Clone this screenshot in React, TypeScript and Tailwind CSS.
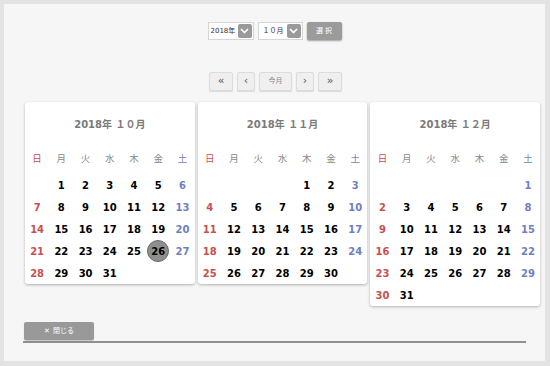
const WEEK = ["日", "月", "火", "水", "木", "金", "土"];

const MONTHS = [
  { title: "2018年 １０月", start: 1, days: 31 },
  { title: "2018年 １１月", start: 4, days: 30 },
  { title: "2018年 １２月", start: 6, days: 31 },
];

function dayColor(col: number) {
  if (col === 0) return "text-[#c8504e]";
  if (col === 6) return "text-[#6f7fc0]";
  return "text-black";
}

function Chevron() {
  return (
    <span className="flex h-[14px] w-[14px] shrink-0 items-center justify-center rounded-[2px] bg-[#9a9a9a]">
      <svg width="9" height="6" viewBox="0 0 9 6" fill="none">
        <path d="M1 1l3.5 3.5L8 1" stroke="#fff" strokeWidth="1.6" />
      </svg>
    </span>
  );
}

function Month({ title, start, days, selected }: { title: string; start: number; days: number; selected?: number }) {
  const cells: (number | null)[] = [];
  for (let i = 0; i < start; i++) cells.push(null);
  for (let d = 1; d <= days; d++) cells.push(d);
  while (cells.length % 7) cells.push(null);

  return (
    <div className="flex-1 rounded-[3px] bg-white shadow-[0_1px_3px_rgba(0,0,0,0.28)]">
      <div className="flex h-[44px] items-center justify-center text-[10px] font-bold text-[#7a7a7a]">{title}</div>
      <div className="grid h-[26px] grid-cols-7 items-center text-center text-[9.5px]">
        {WEEK.map((w, i) => (
          <span key={w} className={i === 0 ? "text-[#c8504e]" : i === 6 ? "text-[#6f7fc0]" : "text-[#888]"}>
            {w}
          </span>
        ))}
      </div>
      <div className="grid grid-cols-7 pt-[2px] text-center text-[10px] font-bold">
        {cells.map((d, i) => (
          <div key={i} className="flex h-[22px] items-center justify-center">
            {d === selected ? (
              <span className="flex h-[22px] w-[22px] items-center justify-center rounded-full border border-[#6a6a6a] bg-[#8e8e8e] text-black">
                {d}
              </span>
            ) : (
              <span className={dayColor(i % 7)}>{d ?? ""}</span>
            )}
          </div>
        ))}
      </div>
    </div>
  );
}

const navBtn =
  "flex h-[19px] items-center justify-center rounded-[2px] border border-[#dcdcdc] bg-[#efefef] text-[#555] shadow-[0_1px_1px_rgba(0,0,0,0.12)]";

export default function App() {
  return (
    <div
      className="h-[366px] w-[550px] bg-[#e3e3e3] pl-[4px] pt-[4px]"
      style={{ fontFamily: '"DejaVu Sans", "Noto Sans CJK JP", sans-serif' }}
    >
      <div className="h-[357px] w-[541px] bg-[#f6f6f6] pt-[18px]">
        <div className="flex justify-center gap-[4px]">
          <div className="flex h-[18px] w-[46px] items-center justify-between whitespace-nowrap border border-[#d6d6d6] bg-white pl-[2px] pr-[1px] text-[7px] text-[#333]">
            2018年
            <Chevron />
          </div>
          <div className="flex h-[18px] w-[45px] items-center justify-between whitespace-nowrap border border-[#d6d6d6] bg-white pl-[4px] pr-[1px] text-[7px] text-[#333]">
            １０月
            <Chevron />
          </div>
          <div className="flex h-[18px] w-[35px] items-center justify-center whitespace-nowrap rounded-[2px] bg-[#9b9b9b] text-[7px] text-white shadow-[0_1px_2px_rgba(0,0,0,0.35)]">
            選 択
          </div>
        </div>

        <div className="mt-[32px] flex justify-center gap-[4px] pl-[2px]">
          <div className={`${navBtn} w-[24px] text-[11px]`}>«</div>
          <div className={`${navBtn} w-[18px] text-[11px]`}>‹</div>
          <div className={`${navBtn} w-[33px] text-[7px] text-[#888]`}>今月</div>
          <div className={`${navBtn} w-[18px] text-[11px]`}>›</div>
          <div className={`${navBtn} w-[24px] text-[11px]`}>»</div>
        </div>

        <div className="ml-[21px] mt-[11px] flex w-[515px] items-start gap-[3px]">
          {MONTHS.map((m, i) => (
            <Month key={m.title} {...m} selected={i === 0 ? 26 : undefined} />
          ))}
        </div>

        <div className="ml-[20px] mt-[16px] flex h-[18px] w-[70px] items-center justify-center gap-[3px] rounded-[2px] bg-[#999] text-[7px] text-white shadow-[0_1px_1px_rgba(0,0,0,0.2)]">
          <span>✕</span>
          <span>閉じる</span>
        </div>
        <div className="ml-[19px] mt-[1px] h-[2px] w-[503px] bg-[#8f8f8f]" />
      </div>
    </div>
  );
}
